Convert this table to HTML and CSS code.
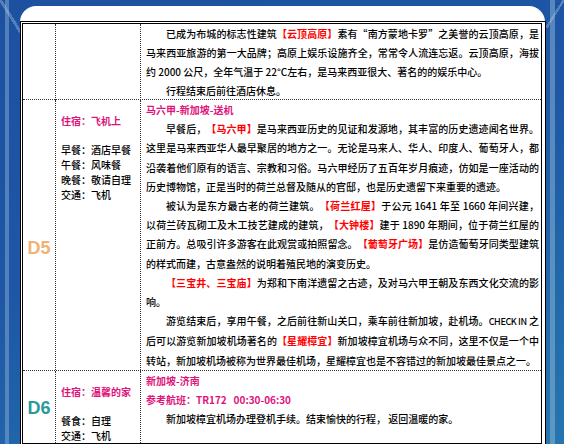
FILE: index.html
```html
<!DOCTYPE html>
<html lang="zh-CN">
<head>
<meta charset="utf-8">
<title>行程</title>
<link rel="stylesheet" href="styles.css">
</head>
<body>
<div class="panel">
  <div class="frame">
    <div class="sheet">
      <div class="row row-first">
        <div class="cell day"></div>
        <div class="cell info"></div>
        <div class="cell desc desc-first">
          <p class="para">已成为布城的标志性建筑<b class="hl">【云顶高原】</b>素有“南方蒙地卡罗”之美誉的云顶高原，是马来西亚旅游的第一大品牌；高原上娱乐设施齐全，常常令人流连忘返。云顶高原，海拔约 2000 公尺，全年气温于 22°C左右，是马来西亚很大、著名的的娱乐中心。</p>
          <p class="para">行程结束后前往酒店休息。</p>
        </div>
      </div>
      <div class="row">
        <div class="cell day"><span class="day-no day-d5">D5</span></div>
        <div class="cell info">
          <p class="stay">住宿：飞机上</p>
          <p class="meal">早餐：酒店早餐</p>
          <p class="meal">午餐：风味餐</p>
          <p class="meal">晚餐：敬请自理</p>
          <p class="meal">交通：飞机</p>
        </div>
        <div class="cell desc">
          <p class="title">马六甲-新加坡-送机</p>
          <p class="para">早餐后，<b class="hl">【马六甲】</b>是马来西亚历史的见证和发源地，其丰富的历史遗迹闻名世界。这里是马来西亚华人最早聚居的地方之一。无论是马来人、华人、印度人、葡萄牙人，都沿袭着他们原有的语言、宗教和习俗。马六甲经历了五百年岁月痕迹，仿如是一座活动的历史博物馆，正是当时的荷兰总督及随从的官邸，也是历史遗留下来重要的遗迹。</p>
          <p class="para">被认为是东方最古老的荷兰建筑。<b class="hl">【荷兰红屋】</b>于公元 1641 年至 1660 年间兴建，以荷兰砖瓦砌工及木工技艺建成的建筑，<b class="hl">【大钟楼】</b>建于 1890 年期间，位于荷兰红屋的正前方。总吸引许多游客在此观赏或拍照留念。<b class="hl">【葡萄牙广场】</b>是仿造葡萄牙同类型建筑的样式而建，古意盎然的说明着殖民地的演变历史。</p>
          <p class="para"><b class="hl">【三宝井、三宝庙】</b>为郑和下南洋遗留之古迹，及对马六甲王朝及东西文化交流的影响。</p>
          <p class="para">游览结束后，享用午餐，之后前往新山关口，乘车前往新加坡，赴机场。<span class="latin">CHECK IN</span> 之后可以游览新加坡机场著名的<b class="hl">【星耀樟宜】</b>新加坡樟宜机场与众不同，这里不仅是一个中转站，新加坡机场被称为世界最佳机场，星耀樟宜也是不容错过的新加坡最佳景点之一。</p>
        </div>
      </div>
      <div class="row row-last">
        <div class="cell day"><span class="day-no day-d6">D6</span></div>
        <div class="cell info">
          <p class="stay">住宿：温馨的家</p>
          <p class="meal">餐食：自理</p>
          <p class="meal">交通：飞机</p>
        </div>
        <div class="cell desc">
          <p class="title">新加坡-济南</p>
          <p class="title">参考航班：TR172&nbsp;&nbsp; 00:30-06:30</p>
          <p class="para">新加坡樟宜机场办理登机手续。结束愉快的行程， 返回温暖的家。</p>
        </div>
      </div>
    </div>
  </div>
</div>
</body>
</html>
```

FILE: styles.css
```css
html, body {
  margin: 0;
  padding: 0;
}

body {
  height: 444px;
  overflow: hidden;
  font-family: "Noto Sans CJK SC", "Noto Sans", sans-serif;
  font-size: 10px;
  font-weight: 500;
  color: #000;
  background:
    linear-gradient(58deg, transparent 46%, rgba(190, 210, 235, 0.35) 46%, rgba(190, 210, 235, 0.35) 54%, transparent 54%) 0 0 / 22px 34px no-repeat,
    linear-gradient(-58deg, transparent 46%, rgba(190, 210, 235, 0.35) 46%, rgba(190, 210, 235, 0.35) 54%, transparent 54%) 546px 0 / 18px 28px no-repeat,
    linear-gradient(to right, transparent 5px, rgba(150, 180, 215, 0.45) 5px, rgba(150, 180, 215, 0.45) 9px, transparent 9px),
    linear-gradient(to right, transparent 550px, rgba(160, 195, 215, 0.45) 550px, rgba(160, 195, 215, 0.45) 555px, transparent 555px),
    linear-gradient(160deg, #1c51a0 0%, #1d57a5 45%, #2576b0 100%);
}

.panel {
  width: 525px;
  margin: 6px 0 0 20px;
  padding-top: 15px;
  background: #fff;
  border-radius: 16px 16px 0 0;
}

.frame {
  width: 522px;
  border: 1px solid #000;
  padding: 1px;
}

.sheet {
  width: 518px;
  border: 1px solid #000;
}

.row {
  display: grid;
  grid-template-columns: 33px 85px 400px;
  border-bottom: 1px dotted #333;
}

.row-last {
  border-bottom: none;
}

.row-first {
  height: 75px;
}

.cell {
  box-sizing: border-box;
  min-width: 0;
}

.day,
.info {
  border-right: 1px dotted #333;
}

.day {
  text-align: center;
}

.day-no {
  display: block;
  font-family: "Liberation Sans", Arial, sans-serif;
  font-weight: bold;
  font-size: 18px;
  line-height: 22px;
}

.day-d5 {
  color: #f2b273;
  padding-top: 137px;
}

.day-d6 {
  color: #2a9a9c;
  padding-top: 26px;
}

.info {
  padding: 13px 0 0 5px;
}

.info p {
  margin: 0;
}

.stay {
  color: #e0137b;
  font-weight: bold;
  line-height: 15px;
  margin-bottom: 14px !important;
}

.meal {
  line-height: 15px;
}

.desc {
  padding: 0 2px 0 5px;
  line-height: 19.2px;
  text-align: justify;
  text-spacing-trim: space-all;
}

.desc-first {
  line-height: 19px;
}

.desc p {
  margin: 0;
}

.para {
  text-indent: 20px;
}

.title {
  color: #e0137b;
  font-weight: bold;
}

.hl {
  color: #ff0000;
  font-weight: bold;
}

.latin {
  font-size: 9px;
  letter-spacing: -0.4px;
}
```
